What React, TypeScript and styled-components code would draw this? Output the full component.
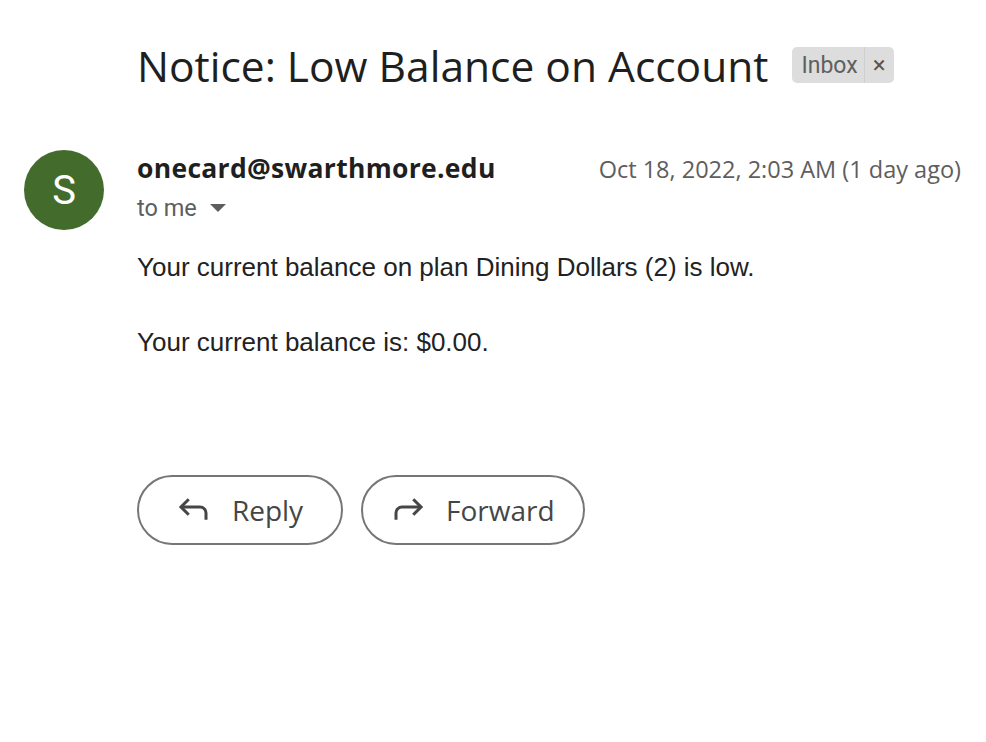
import React from 'react';
import styled, { createGlobalStyle } from 'styled-components';

const GlobalStyle = createGlobalStyle`
  html, body {
    margin: 0;
    padding: 0;
    background: #ffffff;
  }
  body {
    font-family: 'Roboto', 'Liberation Sans', Arial, sans-serif;
    color: #1f1f1f;
  }
`;

const Page = styled.div`
  display: grid;
  grid-template-columns: 137px 1fr;
  padding: 37px 25px 0 0;
`;

const SubjectRow = styled.div`
  grid-column: 2;
  display: flex;
  align-items: center;
  gap: 24px;
  height: 56px;
`;

const Subject = styled.h1`
  margin: 0;
  font-family: 'Open Sans', sans-serif;
  font-weight: 400;
  font-size: 42.5px;
  color: #1f1f1f;
`;

const Chip = styled.span`
  display: inline-flex;
  align-items: stretch;
  height: 36px;
  border-radius: 5px;
  background: #dddddd;
  color: #5f5f5f;
  font-family: 'Roboto', sans-serif;
  font-size: 23px;
  overflow: hidden;
`;

const ChipLabel = styled.span`
  display: flex;
  align-items: center;
  padding: 0 6px 0 9px;
  border-right: 1px solid #cfcfcf;
`;

const ChipClose = styled.span`
  display: flex;
  align-items: center;
  justify-content: center;
  width: 29px;
  font-size: 24px;
  color: #555;
`;

const AvatarCell = styled.div`
  grid-column: 1;
  padding: 57px 0 0 24px;
`;

const Avatar = styled.div`
  width: 80px;
  height: 80px;
  border-radius: 50%;
  background: #436b2c;
  color: #ffffff;
  display: flex;
  align-items: center;
  justify-content: center;
  font-family: 'Roboto', sans-serif;
  font-size: 40px;
`;

const Main = styled.div`
  grid-column: 2;
  padding-top: 57px;
`;

const HeaderRow = styled.div`
  display: flex;
  justify-content: space-between;
  align-items: baseline;
`;

const Sender = styled.span`
  font-family: 'Open Sans', sans-serif;
  font-weight: 700;
  font-size: 26.5px;
  color: #1f1f1f;
  letter-spacing: 0.3px;
`;

const DateText = styled.span`
  font-family: 'Open Sans', sans-serif;
  font-size: 23.5px;
  color: #5e5e5e;
`;

const Recipient = styled.div`
  display: flex;
  align-items: center;
  gap: 13px;
  margin-top: 8px;
  font-family: 'Roboto', sans-serif;
  font-size: 23.5px;
  color: #5e5e5e;
`;

const Caret = styled.span`
  width: 0;
  height: 0;
  border-left: 8px solid transparent;
  border-right: 8px solid transparent;
  border-top: 8px solid #5e5e5e;
`;

const Body = styled.div`
  margin-top: 30px;
  font-family: 'Liberation Sans', Arial, sans-serif;
  font-size: 26px;
  line-height: 30px;
  color: #222222;
`;

const Paragraph = styled.p`
  margin: 0 0 45px;
`;

const Actions = styled.div`
  display: flex;
  gap: 18px;
  margin-top: 118px;
`;

const ActionButton = styled.button`
  display: flex;
  align-items: center;
  justify-content: center;
  gap: 20px;
  min-width: 206px;
  height: 70px;
  padding: 0 28px 0 27px;
  border: 2px solid #747775;
  border-radius: 36px;
  background: #ffffff;
  color: #444746;
  font-family: 'Open Sans', sans-serif;
  font-size: 28px;
  font-weight: 500;
`;

const ReplyIcon = () => (
  <svg width="36" height="36" viewBox="0 0 24 24" fill="none" stroke="#444746" strokeWidth="2" strokeLinecap="butt">
    <path d="M8.5 4.8 3.3 10 8.5 15.2" />
    <path d="M3.3 10H16a4 4 0 0 1 4 4v4.5" />
  </svg>
);

const ForwardIcon = () => (
  <svg width="36" height="36" viewBox="0 0 24 24" fill="none" stroke="#444746" strokeWidth="2" strokeLinecap="butt">
    <path d="M15.5 4.8 20.7 10 15.5 15.2" />
    <path d="M20.7 10H8a4 4 0 0 0-4 4v4.5" />
  </svg>
);

export default function App() {
  return (
    <>
      <GlobalStyle />
      <Page>
        <SubjectRow>
          <Subject>Notice: Low Balance on Account</Subject>
          <Chip>
            <ChipLabel>Inbox</ChipLabel>
            <ChipClose>×</ChipClose>
          </Chip>
        </SubjectRow>
        <AvatarCell>
          <Avatar>S</Avatar>
        </AvatarCell>
        <Main>
          <HeaderRow>
            <Sender>onecard@swarthmore.edu</Sender>
            <DateText>Oct 18, 2022, 2:03 AM (1 day ago)</DateText>
          </HeaderRow>
          <Recipient>
            to me <Caret />
          </Recipient>
          <Body>
            <Paragraph>Your current balance on plan Dining Dollars (2) is low.</Paragraph>
            <Paragraph>Your current balance is: $0.00.</Paragraph>
          </Body>
          <Actions>
            <ActionButton>
              <ReplyIcon />
              Reply
            </ActionButton>
            <ActionButton>
              <ForwardIcon />
              Forward
            </ActionButton>
          </Actions>
        </Main>
      </Page>
    </>
  );
}
